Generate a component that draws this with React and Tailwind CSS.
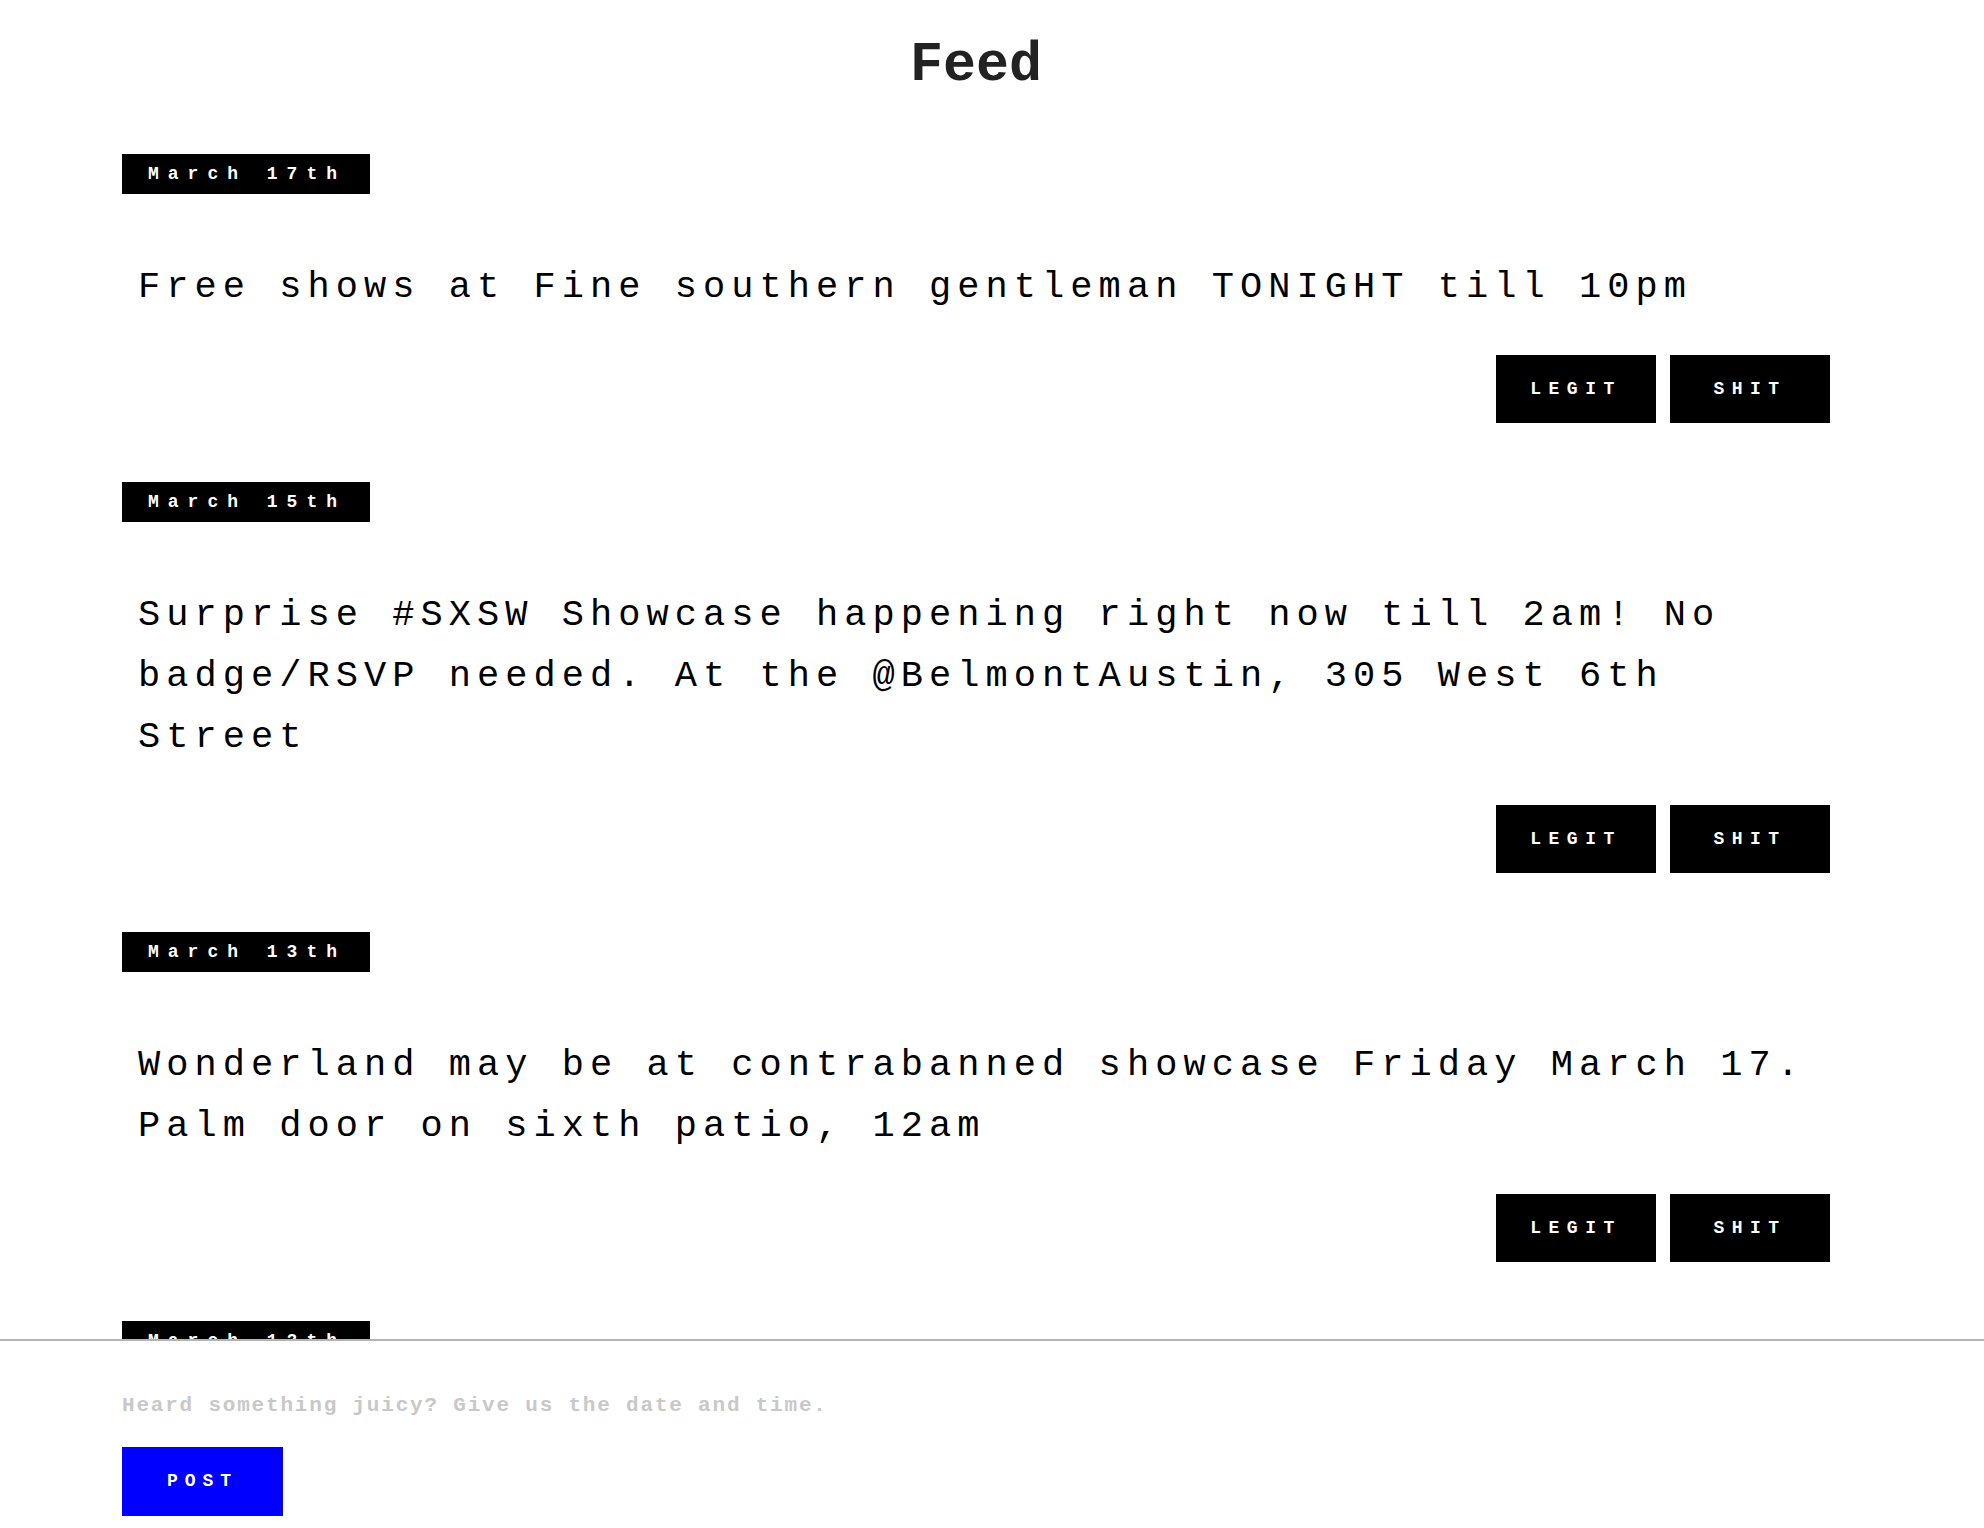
import React from "react";

const posts = [
  {
    id: 1,
    date: "March 17th",
    body: "Free shows at Fine southern gentleman TONIGHT till 10pm",
  },
  {
    id: 2,
    date: "March 15th",
    body: "Surprise #SXSW Showcase happening right now till 2am! No badge/RSVP needed. At the @BelmontAustin, 305 West 6th Street",
  },
  {
    id: 3,
    date: "March 13th",
    body: "Wonderland may be at contrabanned showcase Friday March 17. Palm door on sixth patio, 12am",
  },
  {
    id: 4,
    date: "March 12th",
    body: "Secret set at the Mohawk patio, doors at 9pm",
  },
];

const VoteButton = ({ label }) => (
  <button className="w-[160px] h-[68px] bg-black text-white font-bold text-[18px] tracking-[7.5px] flex items-center justify-center">
    {label}
  </button>
);

const FeedItem = ({ post }) => (
  <div className="mb-[59px]">
    {/* date tag */}
    <div className="w-[248px] h-[40px] bg-black text-white flex items-center pl-[26px] text-[18px] font-bold tracking-[9px]">
      {post.date}
    </div>
    <p className="mt-[63px] px-[16px] text-[37px] leading-[61px] tracking-[6.05px] text-black">
      {post.body}
    </p>
    <div className="mt-[37px] flex justify-end gap-[14px]">
      <VoteButton label="LEGIT" />
      <VoteButton label="SHIT" />
    </div>
  </div>
);

export default function App() {
  return (
    <div className="h-[1528px] flex flex-col bg-white overflow-hidden font-['Liberation_Mono','Courier_New',monospace]">
      <main className="flex-1 overflow-hidden">
        <div className="ml-[122px] w-[1708px]">
          <h1 className="pt-[38px] text-[55px] leading-[56px] font-bold text-center text-[#222]">
            Feed
          </h1>
          <div className="mt-[60px]">
            {posts.map((p) => (
              <FeedItem key={p.id} post={p} />
            ))}
          </div>
        </div>
      </main>

      {/* composer */}
      <footer className="shrink-0 h-[189px] border-t-2 border-[#b3b3b3] pl-[122px] pt-[44px]">
        <input
          type="text"
          placeholder="Heard something juicy? Give us the date and time."
          className="block w-[900px] h-[40px] text-[21px] tracking-[1.8px] font-bold text-black placeholder:text-[#c8c8c8] outline-none bg-transparent"
        />
        <div className="mt-[22px]">
          <button className="w-[161px] h-[69px] bg-[#0000ff] text-white font-bold text-[18px] tracking-[7px] flex items-center justify-center">
            POST
          </button>
        </div>
      </footer>
    </div>
  );
}
